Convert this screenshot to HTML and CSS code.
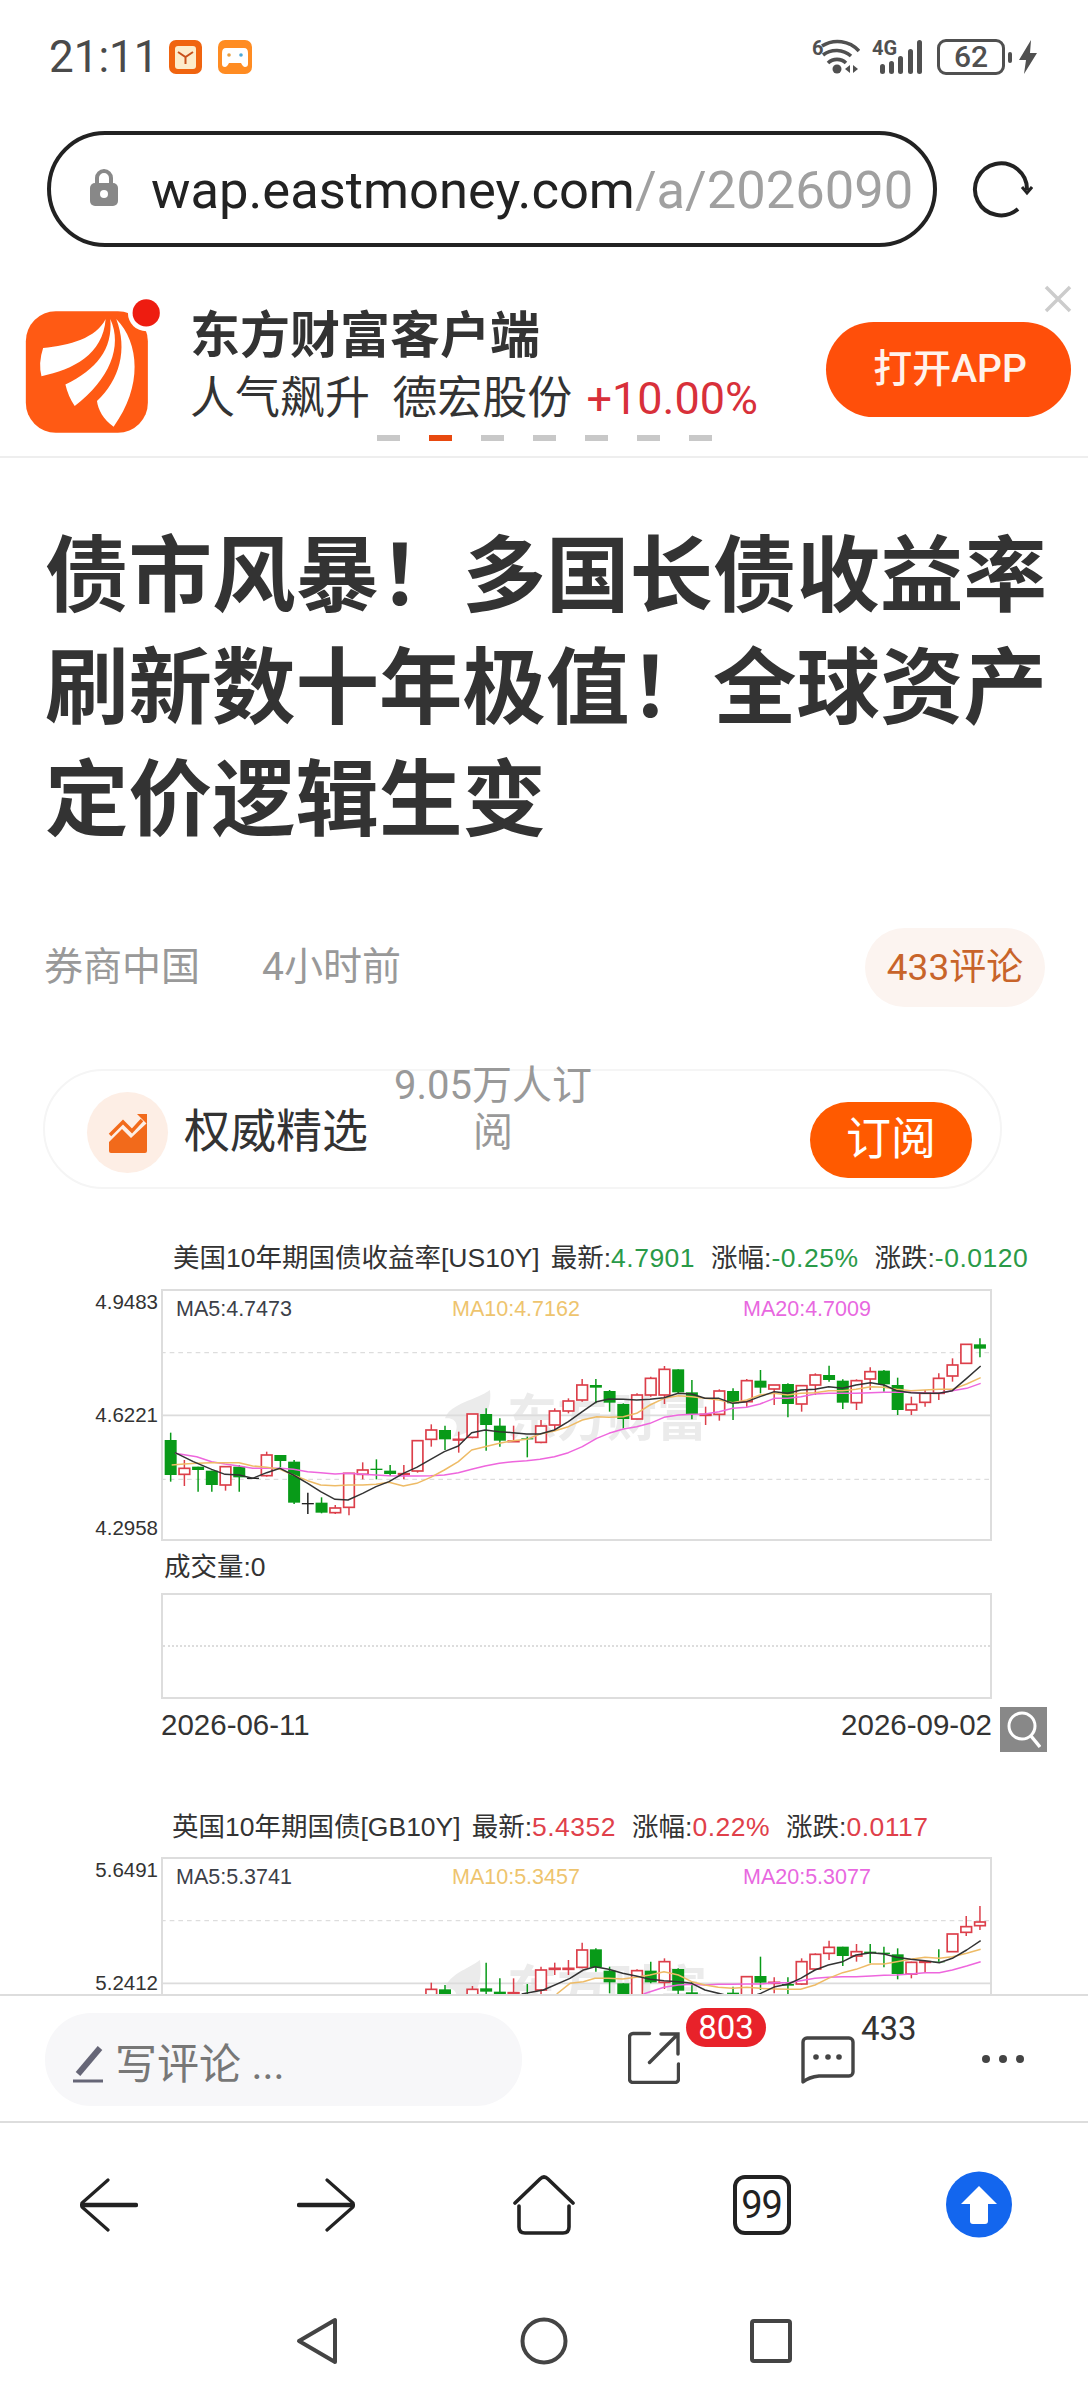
FILE: index.html
```html
<!DOCTYPE html>
<html lang="zh-CN">
<head>
    <meta charset="UTF-8">
    <meta name="viewport" content="width=device-width, initial-scale=1.0">
    <title>债市风暴</title>
    <link rel="stylesheet" href="styles.css">
</head>
<body>
    <div class="phone">
        <!-- status bar -->
        <div class="status-bar">
            <span class="clock">21:11</span>
            <svg class="app-dot" viewBox="0 0 33 34">
                <rect width="33" height="34" rx="7" fill="#f0640f"/>
                <rect x="6" y="6" width="21" height="23" rx="3" fill="#fdeccb"/>
                <path d="M9 12l7.500 5 7.500-5M16.500 17v7" fill="none" stroke="#c8501a" stroke-width="2"/>
            </svg>
            <svg class="app-dot app-dot-game" viewBox="0 0 34 34">
                <rect width="34" height="34" rx="7" fill="#ff8c22"/>
                <path d="M8 8h18q4 0 4 5v11q0 3-3 3-2 0-4-4H11q-2 4-4 4-3 0-3-3V13q0-5 4-5z" fill="#fff"/>
                <circle cx="11" cy="15" r="1.800" fill="#e8a040"/>
                <circle cx="23" cy="15" r="1.800" fill="#4aa8d8"/>
            </svg>
            <div class="status-right">
                <svg class="wifi" width="48" height="44" viewBox="812 30 48 44">
                    <text x="812" y="54" class="status-mini">6</text>
                    <g fill="none" stroke="#505050" stroke-width="3.600">
                        <path d="M822 45a29 29 0 0 1 37 5"/>
                        <path d="M823 54a22 22 0 0 1 28 1"/>
                        <path d="M828 62a13 13 0 0 1 18 0"/>
                    </g>
                    <circle cx="837" cy="68" r="4.500" fill="#505050"/>
                    <path d="M850 64v8l-5-4zM853 64v8l5-4z" fill="#505050"/>
                </svg>
                <svg class="signal" width="51" height="44" viewBox="872 30 51 44">
                    <text x="872" y="54" class="status-mini">4G</text>
                    <g fill="#505050">
                        <rect x="880" y="63" width="5" height="10" rx="2.500"/>
                        <rect x="889" y="60" width="5" height="13" rx="2.500"/>
                        <rect x="898" y="55" width="5" height="18" rx="2.500"/>
                        <rect x="908" y="48" width="5" height="25" rx="2.500"/>
                        <rect x="917" y="39" width="5" height="34" rx="2.500"/>
                    </g>
                </svg>
                <span class="battery">62</span>
                <span class="battery-nub"></span>
                <svg class="bolt" width="18" height="34" viewBox="0 0 18 34">
                    <path d="M12 0L0 20h7L5 34 18 13h-7z" fill="#505050"/>
                </svg>
            </div>
        </div>

        <!-- address bar -->
        <div class="url-row">
            <div class="url-box">
                <svg class="lock" width="28" height="38" viewBox="0 0 28 38">
                    <path d="M7 17V10a7 7 0 0 1 14 0v7" fill="none" stroke="#888" stroke-width="4"/>
                    <rect y="15" width="28" height="23" rx="5" fill="#888"/>
                    <circle cx="14" cy="26" r="4" fill="#fff"/>
                </svg>
                <div class="url-text">wap.eastmoney.com<span class="url-path">/a/202609021</span></div>
            </div>
            <svg class="reload" width="62" height="62" viewBox="0 0 62 62">
                <path d="M56 32A26 26 0 1 0 47 51" fill="none" stroke="#222" stroke-width="4"/>
                <path d="M51 29l5 6 5-6" fill="none" stroke="#222" stroke-width="3"/>
            </svg>
        </div>

        <!-- app banner -->
        <div class="banner">
            <svg class="banner-logo" width="140" height="138" viewBox="70 55 420 415">
                <rect x="78" y="95" width="367" height="365" rx="90" fill="#ff5a14"/>
                <circle cx="440" cy="100" r="55" fill="#fff"/>
                <circle cx="440" cy="100" r="41" fill="#ee1c10"/>
                <g fill="#fff">
                    <path d="M318 118C290 175 210 198 130 205Q115 250 125 290C220 270 310 225 318 118z"/>
                    <path d="M332 118C370 200 330 300 225 380Q205 350 197 315C290 270 340 210 332 118z"/>
                    <path d="M350 118C420 190 430 320 342 442C310 420 295 390 292 365C360 300 385 210 350 118z"/>
                </g>
            </svg>
            <div class="banner-text">
                <div class="banner-name">东方财富客户端</div>
                <div class="banner-sub">人气飙升&nbsp;&nbsp;德宏股份 <span class="banner-up">+10.00%</span></div>
            </div>
            <div class="open-app">打开APP</div>
            <svg class="banner-close" width="28" height="28" viewBox="0 0 28 28">
                <path d="M2 2l24 24M26 2L2 26" stroke="#ccc" stroke-width="3.500"/>
            </svg>
            <div class="banner-dots">
                <i></i><i class="on"></i><i></i><i></i><i></i><i></i><i></i>
            </div>
        </div>

        <!-- article -->
        <div class="article">
            <h1 class="headline">债市风暴&#xFF01;多国长债收益率刷新数十年极值&#xFF01;全球资产定价逻辑生变</h1>

            <div class="meta">
                <span class="source">券商中国</span>
                <span class="time-ago">4小时前</span>
                <span class="comment-chip">433评论</span>
            </div>

            <div class="sub-card">
                <span class="sub-icon">
                    <svg width="40" height="40" viewBox="0 0 40 40">
                        <path d="M1 21L14 8l9 9L33 6" transform="translate(1 1)" fill="none" stroke="#f26a1b" stroke-width="3.500"/>
                        <path d="M29 1h10v10z" fill="#f26a1b"/>
                        <path d="M1 29l13-13 9 9 16-15v28q0 2-2 2H3q-2 0-2-2z" fill="#f26a1b"/>
                    </svg>
                </span>
                <span class="sub-name">权威精选</span>
                <span class="sub-count">9.05万人订阅</span>
                <span class="sub-btn">订阅</span>
            </div>

            <!-- 美国10年期 -->
            <div class="kline kline-first">
                <div class="kline-title">美国10年期国债收益率[US10Y]<span class="kv">最新:<em class="down">4.7901</em></span><span class="kv">涨幅:<em class="down">-0.25%</em></span><span class="kv">涨跌:<em class="down">-0.0120</em></span></div>
                <div class="kline-body">
                    <div class="axis"><span>4.9483</span><span>4.6221</span><span>4.2958</span></div>
                    <div class="plot">
                        <svg id="chartUs" class="plot-svg" viewBox="303 177 2493 756">
                            <g fill="#ebebeb">
                                <path d="M1290 480C1250 510 1170 520 1155 565C1190 560 1200 590 1180 620C1240 610 1300 560 1290 480z"/>
                                <text x="1341" y="618" class="watermark">东方财富</text>
                            </g>
                        </svg>
                        <div class="ma-row">
                            <span class="ma5">MA5:4.7473</span>
                            <span class="ma10">MA10:4.7162</span>
                            <span class="ma20">MA20:4.7009</span>
                        </div>
                    </div>
                </div>
                <div class="volume-label">成交量:0</div>
                <div class="volume-box"><i></i></div>
                <div class="dates">
                    <div class="date-range"><span>2026-06-11</span><span>2026-09-02</span></div>
                    <span class="zoom-btn">
                        <svg width="34" height="38" viewBox="0 0 34 38">
                            <circle cx="15" cy="15" r="13" fill="none" stroke="#fff" stroke-width="3"/>
                            <path d="M24 25l9 11" stroke="#fff" stroke-width="3.500"/>
                        </svg>
                    </span>
                </div>
            </div>

            <!-- 英国10年期 -->
            <div class="kline">
                <div class="kline-title kline-title-uk">英国10年期国债[GB10Y]<span class="kv">最新:<em class="up">5.4352</em></span><span class="kv">涨幅:<em class="up">0.22%</em></span><span class="kv">涨跌:<em class="up">0.0117</em></span></div>
                <div class="kline-body">
                    <div class="axis"><span>5.6491</span><span>5.2412</span><span></span></div>
                    <div class="plot">
                        <svg id="chartUk" class="plot-svg" viewBox="303 21 2493 756">
                            <g fill="#ebebeb">
                                <path d="M1260 330C1220 360 1170 370 1155 415C1190 410 1200 440 1180 470C1240 460 1270 410 1260 330z"/>
                                <text x="1341" y="470" class="watermark">东方财富</text>
                            </g>
                        </svg>
                        <div class="ma-row">
                            <span class="ma5">MA5:5.3741</span>
                            <span class="ma10">MA10:5.3457</span>
                            <span class="ma20">MA20:5.3077</span>
                        </div>
                    </div>
                </div>
            </div>
        </div>

        <!-- comment bar -->
        <div class="comment-bar">
            <div class="comment-input">
                <svg width="30" height="37" viewBox="0 0 30 37">
                    <path d="M27 2L5 28" stroke="#667" stroke-width="6"/>
                    <path d="M0 35h30" stroke="#667" stroke-width="3"/>
                </svg>
                <span>写评论 ...</span>
            </div>
            <div class="action action-share">
                <svg width="52" height="53" viewBox="0 0 52 53" fill="none" stroke="#444" stroke-width="3.400" stroke-linecap="round">
                    <path d="M21.500 2.500H5A3.500 3.500 0 0 0 1.500 6V48A3.500 3.500 0 0 0 5 51.500H47A3.500 3.500 0 0 0 50.500 48V33"/>
                    <path d="M21.500 31.500L50 3M33 3H50V23"/>
                </svg>
                <span class="badge">803</span>
            </div>
            <div class="action action-comment">
                <svg width="54" height="50" viewBox="0 0 54 50" fill="none" stroke="#444" stroke-width="3.400" stroke-linejoin="round">
                    <path d="M2 47V7A4 4 0 0 1 6 3H48A4 4 0 0 1 52 7V37A4 4 0 0 1 48 41H18Q8 42 2 47z"/>
                    <g fill="#444" stroke="none">
                        <circle cx="15" cy="22" r="2.800"/>
                        <circle cx="27" cy="22" r="2.800"/>
                        <circle cx="38" cy="22" r="2.800"/>
                    </g>
                </svg>
                <span class="comment-count">433</span>
            </div>
            <div class="more"><i></i><i></i><i></i></div>
        </div>

        <!-- browser nav -->
        <div class="browser-nav">
            <span class="nav-item">
                <svg width="58" height="54" viewBox="0 0 58 54" fill="none" stroke="#222" stroke-linecap="round">
                    <path d="M28 2L2 25M2 29L28 52" stroke-width="3.200"/>
                    <path d="M2 27H56" stroke-width="4.500"/>
                </svg>
            </span>
            <span class="nav-item">
                <svg width="58" height="54" viewBox="0 0 58 54" fill="none" stroke="#222" stroke-linecap="round">
                    <path d="M30 2L56 25M56 29L30 52" stroke-width="3.200"/>
                    <path d="M2 27H56" stroke-width="4.500"/>
                </svg>
            </span>
            <span class="nav-item">
                <svg width="62" height="60" viewBox="0 0 62 60" fill="none" stroke="#222" stroke-width="3.600" stroke-linecap="round">
                    <path d="M2 28L27 4Q31 0 35 4L60 28"/>
                    <path d="M6 31V52Q6 58 12 58H50Q56 58 56 52V31"/>
                </svg>
            </span>
            <span class="nav-item"><span class="tabs-count">99</span></span>
            <span class="nav-item">
                <svg width="66" height="67" viewBox="0 0 66 67">
                    <circle cx="33" cy="33.500" r="33" fill="#1366ee"/>
                    <path d="M33 15L51 33H42V50Q42 53 39 53H27Q24 53 24 50V33H15z" fill="#fff"/>
                </svg>
            </span>
        </div>

        <!-- system nav -->
        <div class="system-nav">
            <svg width="42" height="48" viewBox="0 0 42 48" fill="none" stroke="#444" stroke-width="4" stroke-linejoin="round">
                <path d="M39 3V45L3 24z"/>
            </svg>
            <svg width="48" height="48" viewBox="0 0 48 48" fill="none" stroke="#444" stroke-width="4">
                <circle cx="24" cy="24" r="21.500"/>
            </svg>
            <svg width="42" height="44" viewBox="0 0 42 44" fill="none" stroke="#444" stroke-width="4" stroke-linejoin="round">
                <rect x="2" y="2" width="38" height="40" rx="2"/>
            </svg>
        </div>
    </div>
    <script src="chart.js"></script>
</body>
</html>
```
FILE: styles.css
```css
* {
    box-sizing: border-box;
}

body {
    font-family: Roboto, 'Noto Sans CJK SC', sans-serif;
    margin: 0;
    padding: 0;
    background-color: #ffffff;
    color: #333333;
}

.phone {
    width: 1088px;
    height: 2400px;
    display: flex;
    flex-direction: column;
    overflow: hidden;
}

/* status bar */
.status-bar {
    height: 114px;
    flex: none;
    display: flex;
    align-items: center;
    padding: 0 51px 0 49px;
}

.clock {
    font-size: 44px;
    color: #4a4a4a;
    width: 120px;
}

.app-dot {
    width: 33px;
    height: 34px;
    margin-top: -1px;
}

.app-dot-game {
    width: 34px;
    margin-left: 16px;
}

.status-right {
    margin-left: auto;
    display: flex;
    align-items: center;
}

.status-mini {
    font-size: 20px;
    font-weight: 700;
    fill: #505050;
}

.wifi {
    margin-right: 12px;
    margin-top: -8px;
}

.signal {
    margin-right: 14px;
    margin-top: -8px;
}

.battery {
    width: 68px;
    height: 36px;
    border: 3px solid #505050;
    border-radius: 9px;
    font-size: 30px;
    line-height: 30px;
    font-weight: 500;
    color: #505050;
    text-align: center;
}

.battery-nub {
    width: 4px;
    height: 11px;
    margin-left: 3px;
    border-radius: 2px;
    background-color: #505050;
}

.bolt {
    margin-left: 7px;
}

/* address bar */
.url-row {
    flex: none;
    margin-top: 17px;
    padding-left: 47px;
    display: flex;
    align-items: center;
}

.url-box {
    width: 890px;
    height: 116px;
    border: 4px solid #222222;
    border-radius: 58px;
    display: flex;
    align-items: center;
    padding-left: 39px;
}

.lock {
    flex: none;
    margin-right: 33px;
    margin-top: -4px;
}

.url-text {
    width: 764px;
    margin-top: 2px;
    overflow: hidden;
    white-space: nowrap;
    font-size: 52.500px;
    color: #222222;
}

.url-path {
    color: #a0a0a0;
}

.reload {
    margin-left: 34px;
}

/* banner */
.banner {
    position: relative;
    flex: none;
    height: 211px;
    display: flex;
    align-items: flex-start;
    padding: 51px 17px 0 23px;
    border-bottom: 2px solid #eeeeee;
}

.banner-text {
    margin-left: 27px;
    margin-top: 15px;
}

.banner-name {
    font-size: 50px;
    line-height: 46px;
    font-weight: 700;
    color: #333333;
}

.banner-sub {
    margin-top: 17px;
    font-size: 45px;
    line-height: 46px;
    color: #333333;
    white-space: nowrap;
}

.banner-up {
    margin-left: 3px;
    color: #d8303a;
}

.open-app {
    margin-left: auto;
    margin-top: 24px;
    padding-left: 3px;
    width: 245px;
    height: 95px;
    border-radius: 48px;
    background-color: #ff4f0a;
    color: #fff3ec;
    font-size: 39px;
    font-weight: 500;
    line-height: 95px;
    text-align: center;
}

.banner-close {
    position: absolute;
    top: 38px;
    right: 16px;
}

.banner-dots {
    position: absolute;
    top: 188px;
    left: 377px;
    display: flex;
    gap: 29px;
}

.banner-dots i {
    width: 23px;
    height: 6px;
    background-color: #c8c8c8;
}

.banner-dots .on {
    background-color: #e8490f;
}

/* article */
.article {
    flex: 1;
    min-height: 0;
    overflow: hidden;
}

.headline {
    margin: 63px 40px 0 45px;
    font-size: 83.500px;
    line-height: 112px;
    font-weight: 700;
    color: #333333;
}

.meta {
    margin: 71px 43px 0 44px;
    display: flex;
    align-items: center;
    font-size: 39px;
    color: #999999;
}

.source,
.time-ago {
    margin-bottom: 9px;
}

.time-ago {
    margin-left: 62px;
}

.comment-chip {
    margin-left: auto;
    width: 180px;
    height: 79px;
    border-radius: 40px;
    background-color: #fcf4f0;
    color: #c8642a;
    font-size: 37px;
    line-height: 79px;
    text-align: center;
}

.sub-card {
    margin: 62px 86px 0 43px;
    height: 120px;
    border: 2px solid #f5f5f5;
    border-radius: 60px;
    display: flex;
    align-items: flex-start;
    padding: 21px 28px 0 42px;
}

.sub-icon {
    flex: none;
    width: 81px;
    height: 81px;
    border-radius: 50%;
    background-color: #fdeee5;
    display: flex;
    align-items: center;
    justify-content: center;
}

.sub-name {
    margin: 7px 0 0 16px;
    font-size: 46px;
    line-height: 64px;
    color: #333333;
}

.sub-count {
    width: 200px;
    margin: -30px 0 0 25px;
    font-size: 40px;
    line-height: 47px;
    color: #999999;
    text-align: center;
}

.sub-btn {
    margin: 10px 0 0 auto;
    width: 162px;
    height: 76px;
    border-radius: 38px;
    background-color: #ff5a00;
    color: #ffffff;
    font-size: 45px;
    line-height: 76px;
    text-align: center;
}

/* k line pictures */
.kline {
    margin-top: 60px;
    font-family: 'Liberation Sans', 'Noto Sans CJK SC', sans-serif;
    color: #333333;
}

.kline-first {
    margin-top: 54px;
}

.kline-title {
    height: 30px;
    padding-left: 173px;
    font-size: 26.500px;
    line-height: 30px;
    white-space: nowrap;
}

.kline-title-uk {
    padding-left: 172px;
}

.kv {
    margin-left: 11px;
}

.kv + .kv {
    margin-left: 16px;
}

.kv em {
    font-style: normal;
    letter-spacing: 0.5px;
}

.down {
    color: #2a9a48;
}

.up {
    color: #e0404a;
}

.kline-body {
    margin-top: 16px;
    display: flex;
    height: 252px;
}

.kline-title-uk + .kline-body {
    margin-top: 15px;
}

.axis {
    width: 158px;
    display: flex;
    flex-direction: column;
    justify-content: space-between;
    align-items: flex-end;
    font-size: 20.500px;
}

.axis span {
    height: 26px;
    line-height: 26px;
}

.plot {
    position: relative;
    width: 831px;
    height: 252px;
    margin-left: 3px;
    box-shadow: inset 0 0 0 2px #dddddd;
}

.plot-svg {
    display: block;
    width: 831px;
    height: 252px;
}

.watermark {
    font-size: 150px;
    font-weight: 700;
}

.ma-row {
    position: absolute;
    top: 7px;
    left: 15px;
    display: grid;
    grid-template-columns: 276px 291px 240px;
    font-size: 21.500px;
    line-height: 26px;
}

.ma5 {
    color: #3c4048;
}

.ma10 {
    color: #eec46e;
}

.ma20 {
    color: #e868e0;
}

.volume-label {
    margin: 11px 0 0 164px;
    font-size: 26.500px;
    line-height: 30px;
}

.volume-box {
    margin: 11px 0 0 161px;
    width: 831px;
    height: 106px;
    border: 2px solid #dddddd;
    display: flex;
    align-items: center;
}

.volume-box i {
    width: 100%;
    border-top: 2px dotted #dddddd;
}

.dates {
    margin: 6px 0 0 161px;
    height: 47px;
    display: flex;
}

.date-range {
    width: 831px;
    display: flex;
    justify-content: space-between;
    font-size: 29.500px;
    line-height: 40px;
}

.zoom-btn {
    margin: 2px 0 0 8px;
    width: 47px;
    height: 45px;
    background-color: #888888;
    display: flex;
    align-items: center;
    justify-content: center;
}

/* comment bar */
.comment-bar {
    flex: none;
    height: 129px;
    border-top: 2px solid #dddddd;
    border-bottom: 2px solid #dddddd;
    display: flex;
    align-items: center;
    padding-left: 45px;
    background-color: #ffffff;
}

.comment-input {
    width: 477px;
    height: 93px;
    margin-top: 2px;
    border-radius: 46px;
    background-color: #f7f7f9;
    display: flex;
    align-items: center;
    padding-left: 28px;
    font-size: 42px;
    color: #777777;
}

.comment-input svg {
    margin-top: 10px;
}

.comment-input span {
    margin: 2px 0 0 12px;
}

.action {
    position: relative;
    display: flex;
}

.action-share {
    margin-left: 106px;
    margin-top: -2px;
}

.action-comment {
    margin-left: 121px;
    margin-top: 2px;
}

.badge {
    position: absolute;
    top: -23px;
    left: 58px;
    width: 80px;
    height: 39px;
    border-radius: 20px;
    background-color: #e8222a;
    color: #ffffff;
    font-size: 33px;
    line-height: 39px;
    text-align: center;
}

.comment-count {
    position: absolute;
    top: -23px;
    left: 60px;
    font-size: 33px;
    line-height: 34px;
    color: #333333;
}

.more {
    margin-left: 127px;
    display: flex;
    gap: 9px;
}

.more i {
    width: 8px;
    height: 8px;
    border-radius: 50%;
    background-color: #444444;
}

/* browser nav */
.browser-nav {
    flex: none;
    height: 163px;
    display: flex;
    align-items: center;
}

.nav-item {
    flex: 1;
    display: flex;
    justify-content: center;
}

.tabs-count {
    width: 58px;
    height: 60px;
    border: 4px solid #222222;
    border-radius: 12px;
    font-size: 38px;
    letter-spacing: -1px;
    line-height: 52px;
    text-align: center;
    color: #222222;
}

/* system nav */
.system-nav {
    flex: none;
    height: 114px;
    display: grid;
    grid-template-columns: 227px 227px 227px;
    justify-content: center;
    justify-items: center;
    align-items: center;
    padding-bottom: 4px;
}
```
FILE: chart.js
```js
// all numbers are in 3x units, the same grid as the plot viewBox
const NS = 'http://www.w3.org/2000/svg';
const STEP = 41.15;
const FIRST_X = 332;
const COLOR = { R: '#dc3f4a', G: '#089a18', K: '#222222' };

function el(svg, name, attrs) {
    const node = document.createElementNS(NS, name);
    for (const key in attrs) node.setAttribute(key, attrs[key]);
    svg.appendChild(node);
    return node;
}

function gridLine(svg, y, dashed) {
    el(svg, 'line', {
        x1: 303, x2: 2796, y1: y, y2: y,
        stroke: dashed ? '#dddddd' : '#dcdcdc',
        'stroke-width': dashed ? 4 : 5,
        'stroke-dasharray': dashed ? '14 12' : 'none'
    });
}

// candle: [index, type, body top, body bottom, wick top, wick bottom]
function candle(svg, c) {
    const x = FIRST_X + c[0] * STEP;
    const color = COLOR[c[1]];
    el(svg, 'line', { x1: x, x2: x, y1: c[4], y2: c[5], stroke: color, 'stroke-width': 4.5 });
    if (c[1] === 'R') {
        el(svg, 'rect', { x: x - 16, y: c[2], width: 32, height: c[3] - c[2], fill: '#ffffff', stroke: color, 'stroke-width': 5 });
    } else {
        el(svg, 'rect', { x: x - 18, y: c[2], width: 36, height: c[3] - c[2], fill: color });
    }
}

function maLine(svg, pts, color, width) {
    el(svg, 'polyline', {
        points: pts.map(p => p.join(',')).join(' '),
        fill: 'none', stroke: color, 'stroke-width': width, 'stroke-linejoin': 'round'
    });
}

function shift(pts, dx) {
    return pts.map(p => [p[0] + dx, p[1]]);
}

// ---- US 10Y ----
const usCandles = [
    [0,'G',630,735,608,755],[1,'R',715,733,690,768],[2,'G',710,720,710,785],[3,'G',722,765,722,785],
    [4,'R',710,765,710,782],[5,'G',710,742,705,785],[6,'K',743,747,743,747],[7,'R',675,737,665,740],
    [8,'G',675,693,675,712],[9,'G',695,818,690,822],[10,'K',819,823,788,852],[11,'G',818,848,802,850],
    [12,'R',834,848,825,852],[13,'R',730,832,730,856],[14,'R',720,733,697,748],[15,'G',716,720,688,748],
    [16,'G',722,732,705,738],[17,'R',731,733,705,748],[18,'R',632,723,632,728],[19,'R',600,628,583,650],
    [20,'G',600,628,587,660],[21,'R',628,630,605,668],[22,'R',552,622,552,625],[23,'G',552,585,535,662],
    [24,'G',587,632,565,650],[25,'R',633,635,587,635],[26,'G',625,628,620,682],[27,'R',588,637,570,640],
    [28,'R',543,585,535,600],[29,'R',513,543,505,550],[30,'R',465,510,447,515],[31,'G',465,473,447,520],
    [32,'G',483,518,480,545],[33,'G',522,567,520,595],[34,'R',495,567,490,568],[35,'R',445,495,440,500],
    [36,'R',418,495,408,522],[37,'G',418,487,418,490],[38,'G',487,552,450,568],[39,'R',553,556,530,585],
    [40,'R',483,553,478,572],[41,'G',483,520,475,570],[42,'R',452,515,447,530],[43,'G',452,473,420,490],
    [44,'R',465,477,465,525],[45,'G',462,522,460,562],[46,'R',467,522,465,545],[47,'R',435,465,430,495],
    [48,'G',435,450,407,455],[49,'G',452,518,448,537],[50,'R',452,518,448,540],[51,'R',425,447,412,480],
    [52,'G',422,463,420,485],[53,'G',465,540,443,555],[54,'R',523,540,500,555],[55,'R',490,517,480,530],
    [56,'R',445,490,430,510],[57,'R',405,438,385,455],[58,'R',343,400,343,400],[59,'G',343,356,325,382]
];

const usMa5 = [[345,668],[400,695],[455,718],[495,733],[537,735],[578,745],[620,728],[660,715],[700,735],[743,760],[782,785],[825,808],[864,810],[908,790],[948,770],[987,755],[1030,730],[1070,712],[1112,688],[1153,665],[1195,648],[1235,608],[1275,600],[1318,605],[1358,608],[1400,612],[1440,612]]
    .concat(shift([[43,600],[85,575],[127,545],[170,515],[207,507],[250,508],[290,510],[330,508],[372,503],[415,490],[455,492],[495,505],[537,505],[578,520],[620,515],[660,500],[703,485],[743,490],[783,480],[825,478],[866,470],[908,475],[948,465],[992,458],[1032,465],[1070,482],[1113,488],[1153,490],[1197,490],[1237,482],[1280,445],[1322,408]], 1440));
const usMa10 = [[335,705],[372,702],[410,700],[455,698],[495,698],[537,698],[578,708],[620,712],[660,718],[700,735],[743,752],[782,765],[825,767],[864,765],[908,765],[948,763],[987,757],[1030,768],[1070,760],[1112,742],[1153,720],[1195,695],[1235,660],[1275,650],[1318,640],[1358,632],[1400,628],[1440,612]]
    .concat(shift([[43,603],[85,590],[127,570],[170,560],[207,562],[250,560],[290,550],[330,525],[372,505],[415,497],[455,500],[495,505],[537,510],[578,518],[620,510],[660,495],[703,490],[743,495],[783,490],[825,488],[866,482],[908,482],[948,478],[992,470],[1032,472],[1070,478],[1113,482],[1153,480],[1197,478],[1237,478],[1280,462],[1322,443]], 1440));
const usMa20 = [[345,670],[410,680],[455,695],[495,702],[537,708],[578,715],[620,715],[660,715],[700,718],[743,725],[782,728],[825,732],[864,730],[908,733],[948,735],[987,737],[1030,738],[1070,738],[1112,737],[1153,735],[1195,728],[1235,718],[1275,708],[1318,700],[1358,695],[1400,692],[1440,688]]
    .concat(shift([[43,680],[85,668],[127,650],[170,625],[207,610],[250,597],[290,590],[330,580],[372,562],[415,555],[455,553],[495,552],[537,545],[578,535],[620,532],[660,522],[703,505],[743,505],[783,500],[825,492],[866,490],[908,490],[948,490],[992,488],[1032,487],[1070,487],[1113,487],[1153,490],[1197,490],[1237,482],[1280,475],[1322,460]], 1440));

// ---- UK 10Y ----
const ukCandles = [
    [19,'R',418,450,398,450],[20,'G',418,450,405,450],[22,'R',418,450,408,450],[23,'G',415,425,338,450],
    [24,'G',425,432,385,450],[25,'R',428,432,385,450],[26,'G',432,450,402,450],[27,'R',360,420,350,450],
    [28,'R',355,358,338,375],[29,'R',355,358,330,375],[30,'R',300,352,278,355],[31,'G',298,352,295,365],
    [32,'G',362,397,350,430],[33,'G',400,450,400,450],[34,'R',362,450,358,450],[35,'G',362,397,335,400],
    [36,'R',335,397,325,417],[37,'G',357,422,355,432],[38,'G',427,432,395,450],[41,'G',428,450,410,450],
    [42,'R',380,450,378,450],[43,'G',378,398,320,420],[44,'R',397,400,382,430],[45,'G',402,407,382,432],
    [46,'R',335,402,325,405],[47,'R',313,357,310,360],[48,'R',292,310,272,330],[49,'G',290,318,290,348],
    [50,'R',305,318,282,335],[51,'G',305,310,282,340],[52,'G',308,312,290,352],[53,'G',313,372,295,388],
    [54,'R',337,372,335,385],[55,'R',335,337,335,368],[56,'G',335,337,298,335],[57,'R',252,305,252,305],
    [58,'R',230,247,198,258],[59,'R',216,227,168,240]
];

const ukMa5 = [[1385,432],[1450,420]].concat(shift([[0,385],[40,360],[75,350],[116,358],[158,370],[198,378],[240,388],[282,392],[325,395],[365,400],[405,420],[445,430],[487,440],[530,445],[572,430],[615,410],[655,402],[692,385],[735,360],[775,345],[818,335],[858,315],[903,308],[942,312],[980,322],[1022,328],[1065,332],[1108,338],[1147,325],[1190,300],[1232,272]], 1530));
const ukMa10 = [[1490,432]].concat(shift([[0,400],[40,395],[75,385],[116,385],[158,387],[198,382],[240,375],[282,365],[325,375],[365,395],[405,405],[445,412],[487,415],[530,412],[572,415],[615,417],[655,418],[692,418],[735,405],[775,385],[818,368],[858,358],[903,342],[942,342],[980,335],[1022,328],[1065,322],[1108,325],[1147,320],[1190,310],[1232,298]], 1530));
const ukMa20 = shift([[220,432],[282,412],[325,405],[365,403],[405,405],[445,403],[487,403],[530,402],[572,402],[615,398],[655,398],[692,392],[735,385],[775,382],[818,380],[858,380],[903,378],[942,376],[980,375],[1022,372],[1065,368],[1108,368],[1147,360],[1190,348],[1232,335]], 1530);

function draw(id, grid, candles, ma5, ma10, ma20) {
    const svg = document.getElementById(id);
    grid.forEach(g => gridLine(svg, g[0], g[1]));
    candles.forEach(c => candle(svg, c));
    maLine(svg, ma20, '#ee66dd', 4.5);
    maLine(svg, ma10, '#eebb66', 4.5);
    maLine(svg, ma5, '#333333', 4.5);
}

draw('chartUs', [[368, true], [556, false], [748, true]], usCandles, usMa5, usMa10, usMa20);
draw('chartUk', [[212, true], [400, false]], ukCandles, ukMa5, ukMa10, ukMa20);
```
